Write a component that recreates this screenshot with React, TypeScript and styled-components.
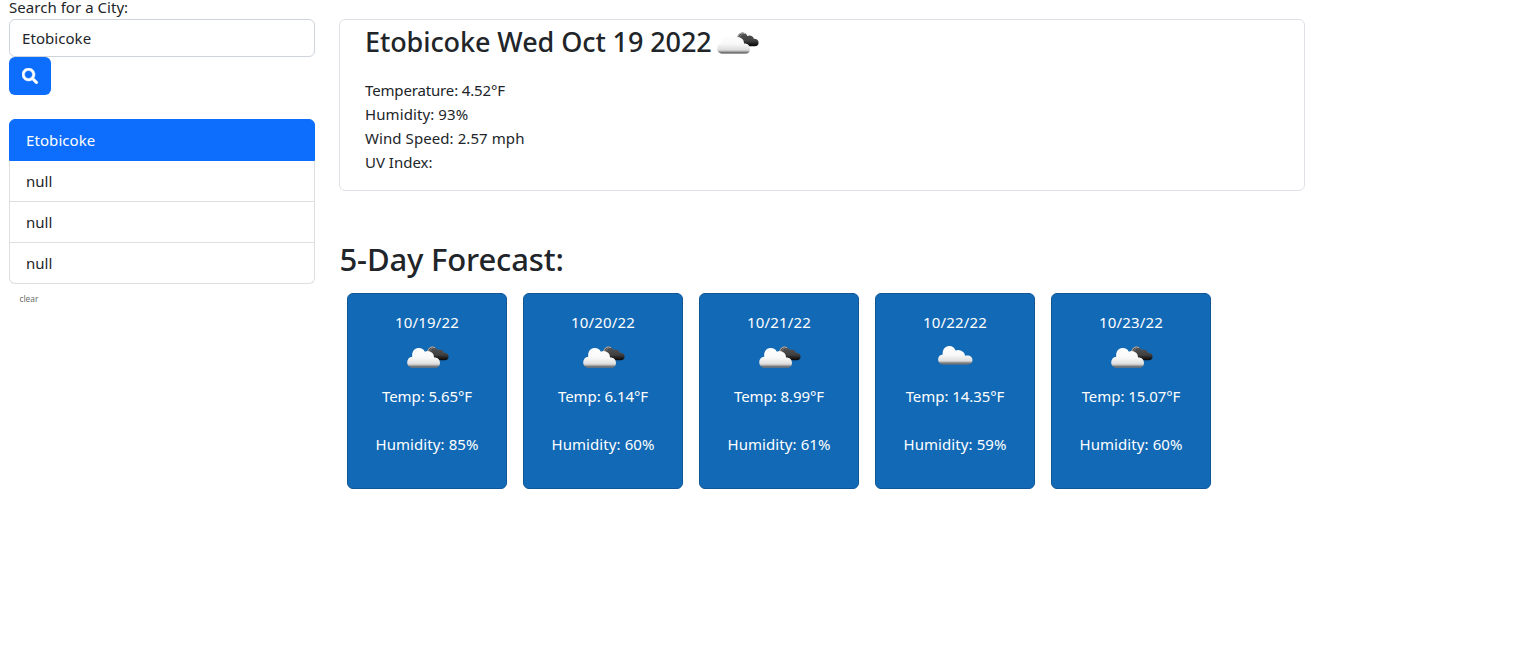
import React, { useId } from "react";
import styled, { createGlobalStyle } from "styled-components";

const GlobalStyle = createGlobalStyle`
  *, *::before, *::after { box-sizing: border-box; }
  body {
    margin: 0;
    background: #fff;
    color: #212529;
    font: 400 15px/24px "Noto Sans", "Open Sans", sans-serif;
  }
`;

const Page = styled.div`
  display: flex;
  gap: 24px;
  width: 1305px;
  padding-left: 9px;
`;

const Sidebar = styled.aside`
  flex: 0 0 306px;
  display: flex;
  flex-direction: column;
  align-items: stretch;
`;

const Label = styled.label`
  height: 19px;
  line-height: 15px;
  letter-spacing: 0.04px;
`;

const SearchInput = styled.input`
  width: 100%;
  height: 38px;
  padding: 6px 12px;
  border: 1px solid #ced4da;
  border-radius: 6px;
  background: #fff;
  color: #212529;
  font: inherit;
  letter-spacing: 0.06px;
  outline: none;
`;

const SearchButton = styled.button`
  display: flex;
  align-items: center;
  justify-content: center;
  width: 42px;
  height: 38px;
  padding: 0;
  border: 0;
  border-radius: 6px;
  background: #0d6efd;
  color: #fff;
`;

const CityList = styled.ul`
  margin: 24px 0 0;
  padding: 0;
  list-style: none;
  border-radius: 6px;
`;

const City = styled.li<{ $active?: boolean }>`
  height: ${(p) => (p.$active ? 42 : 41)}px;
  padding: 8px 16px;
  border: 1px solid ${(p) => (p.$active ? "#0d6efd" : "#dfdfdf")};
  border-top-width: ${(p) => (p.$active ? 1 : 0)}px;
  background: ${(p) => (p.$active ? "#0d6efd" : "#fff")};
  color: ${(p) => (p.$active ? "#fff" : "#212529")};
  line-height: 24px;
  letter-spacing: ${(p) => (p.$active ? 0.08 : 0)}px;
  &:first-child { border-radius: 6px 6px 0 0; }
  &:last-child { border-radius: 0 0 6px 6px; }
`;

const ClearButton = styled.button`
  align-self: flex-start;
  margin: 8px 0 0 10.5px;
  padding: 0;
  border: 0;
  background: none;
  color: #6c6c6c;
  font: 400 8.3px/14px "Noto Sans", sans-serif;
`;

const Main = styled.main`
  flex: 1;
  padding-top: 19px;
`;

const CurrentCard = styled.section`
  height: 172px;
  padding: 0 25px;
  border: 1px solid #dee2e6;
  border-radius: 6px;
`;

const CityTitle = styled.h3`
  display: flex;
  align-items: center;
  height: 43px;
  margin: 0 0 15px;
  font-size: 27px;
  font-weight: 500;
  line-height: 34px;
  letter-spacing: -0.09px;
`;

const TitleIcon = styled.span`
  display: flex;
  padding-top: 3px;
`;

const Reading = styled.p<{ $tracking?: number }>`
  margin: 0;
  letter-spacing: ${(p) => p.$tracking ?? 0}px;
`;

const ForecastTitle = styled.h2`
  margin: 48px 0 14px;
  padding-left: 0.5px;
  font-size: 31px;
  font-weight: 500;
  line-height: 40px;
  letter-spacing: -0.15px;
`;

const ForecastRow = styled.div`
  display: flex;
  gap: 16px;
  padding-left: 8px;
`;

const DayCard = styled.article`
  display: flex;
  flex-direction: column;
  align-items: center;
  width: 160px;
  height: 196px;
  padding-top: 16px;
  border: 1px solid #0f5695;
  border-radius: 6px;
  background: #1269b5;
  color: #fff;
`;

const DayDate = styled.div`
  margin-bottom: 1px;
  letter-spacing: 0.2px;
`;

const DayTemp = styled.div`
  margin: 5px 0 24px;
  letter-spacing: -0.06px;
`;

const DayHumidity = styled.div`
  letter-spacing: 0.08px;
`;

const CloudSvg = styled.svg`
  display: block;
  flex: none;
`;

function CloudIcon({ broken }: { broken: boolean }) {
  const id = useId();
  const light = `${id}-light`;
  const dark = `${id}-dark`;
  return (
    <CloudSvg width="50" height="44" viewBox="0 3 50 44" aria-hidden="true">
      <defs>
        <linearGradient id={light} x1="0" y1="0" x2="0" y2="1">
          <stop offset="0" stopColor="#fff" />
          <stop offset="0.5" stopColor="#f8f8f8" />
          <stop offset="0.8" stopColor="#dedede" />
          <stop offset="0.87" stopColor="#b5b5b5" />
          <stop offset="0.92" stopColor="#777" />
          <stop offset="1" stopColor="#777" />
        </linearGradient>
        <linearGradient id={dark} x1="0" y1="0" x2="0" y2="1">
          <stop offset="0" stopColor="#555" />
          <stop offset="0.6" stopColor="#404040" />
          <stop offset="0.85" stopColor="#191919" />
          <stop offset="1" stopColor="#050505" />
        </linearGradient>
      </defs>
      {broken ? (
        <>
          <path
            fill={`url(#${dark})`}
            d="M25 20.5C25.6 16.8 27.6 14.6 30.4 14.6C32.8 14.6 34.6 16 35.3 18C36.4 17.4 37.6 17.3 38.8 17.7C40.6 18.3 41.7 19.4 41.8 20.8C44.7 20.7 46.6 22.4 46.6 24.7C46.6 26.9 45.2 28.3 42.8 28.3H30Z"
          />
          <path
            fill="none"
            stroke="#b9b9b9"
            strokeWidth="1"
            d="M25.8 19C26.5 16.4 28.2 15 30.4 15C31.5 15 32.4 15.3 33.1 15.9"
          />
          <path
            fill="none"
            stroke="#858585"
            strokeWidth="0.9"
            d="M27.5 19.2C28 17.6 29 16.7 30.4 16.5"
          />
          <path
            fill={`url(#${light})`}
            d="M10.6 35.8C7.3 35.8 5.2 33.5 5.2 30.3C5.2 27.2 7.2 25 10.2 24.7C9.8 19.8 12.2 16.1 16.5 16.1C19.8 16.1 22 17.6 22.9 19.8C24.5 18.9 26.7 18.9 28.5 19.7C30.9 20.7 32.1 22.8 32 25.5C35.6 25.3 38 27.6 38 30.8C38 34 36.2 35.8 33.3 35.8Z"
          />
        </>
      ) : (
        <path
          fill={`url(#${light})`}
          d="M13 32.4C10.1 32.4 8.1 30.5 8.1 27.6C8.1 24.9 9.9 22.8 12.7 22.6C12.3 17.5 14.9 14 19.2 14C22.5 14 24.7 15.8 25.6 18.6C27.3 17.8 29.2 17.8 31.2 18.7C33.6 19.8 34.9 21.4 35 23.7C39.2 22.6 42.5 24.4 42.5 28C42.5 30.8 40.8 32.4 37.7 32.4Z"
        />
      )}
    </CloudSvg>
  );
}

function SearchIcon() {
  return (
    <svg width="16" height="16" viewBox="0 0 512 512" fill="currentColor" stroke="currentColor" strokeWidth="14" aria-hidden="true">
      <path d="M505 442.700 405.300 343c-4.500-4.500-10.600-7-17-7H372c27.600-35.300 44-79.700 44-128C416 93.100 322.900 0 208 0S0 93.100 0 208s93.100 208 208 208c48.300 0 92.700-16.400 128-44v16.300c0 6.400 2.500 12.500 7 17l99.700 99.700c9.400 9.400 24.600 9.400 33.900 0l28.300-28.300c9.400-9.400 9.400-24.600.1-34zM208 336c-70.700 0-128-57.200-128-128 0-70.700 57.200-128 128-128 70.700 0 128 57.200 128 128 0 70.700-57.200 128-128 128z" />
    </svg>
  );
}

const days = [
  { date: "10/19/22", broken: true, temp: "5.65", humidity: 85 },
  { date: "10/20/22", broken: true, temp: "6.14", humidity: 60 },
  { date: "10/21/22", broken: true, temp: "8.99", humidity: 61 },
  { date: "10/22/22", broken: false, temp: "14.35", humidity: 59 },
  { date: "10/23/22", broken: true, temp: "15.07", humidity: 60 },
];

export default function App() {
  return (
    <>
      <GlobalStyle />
      <Page>
        <Sidebar>
          <Label htmlFor="city">Search for a City:</Label>
          <SearchInput id="city" defaultValue="Etobicoke" />
          <SearchButton aria-label="Search">
            <SearchIcon />
          </SearchButton>
          <CityList>
            <City $active>Etobicoke</City>
            <City>null</City>
            <City>null</City>
            <City>null</City>
          </CityList>
          <ClearButton>clear</ClearButton>
        </Sidebar>
        <Main>
          <CurrentCard>
            <CityTitle>
              Etobicoke Wed Oct 19 2022
              <TitleIcon>
                <CloudIcon broken />
              </TitleIcon>
            </CityTitle>
            <Reading $tracking={-0.15}>Temperature: 4.52°F</Reading>
            <Reading $tracking={0.1}>Humidity: 93%</Reading>
            <Reading $tracking={0.08}>Wind Speed: 2.57 mph</Reading>
            <Reading>UV Index:</Reading>
          </CurrentCard>
          <ForecastTitle>5-Day Forecast:</ForecastTitle>
          <ForecastRow>
            {days.map((day) => (
              <DayCard key={day.date}>
                <DayDate>{day.date}</DayDate>
                <CloudIcon broken={day.broken} />
                <DayTemp>Temp: {day.temp}°F</DayTemp>
                <DayHumidity>Humidity: {day.humidity}%</DayHumidity>
              </DayCard>
            ))}
          </ForecastRow>
        </Main>
      </Page>
    </>
  );
}
